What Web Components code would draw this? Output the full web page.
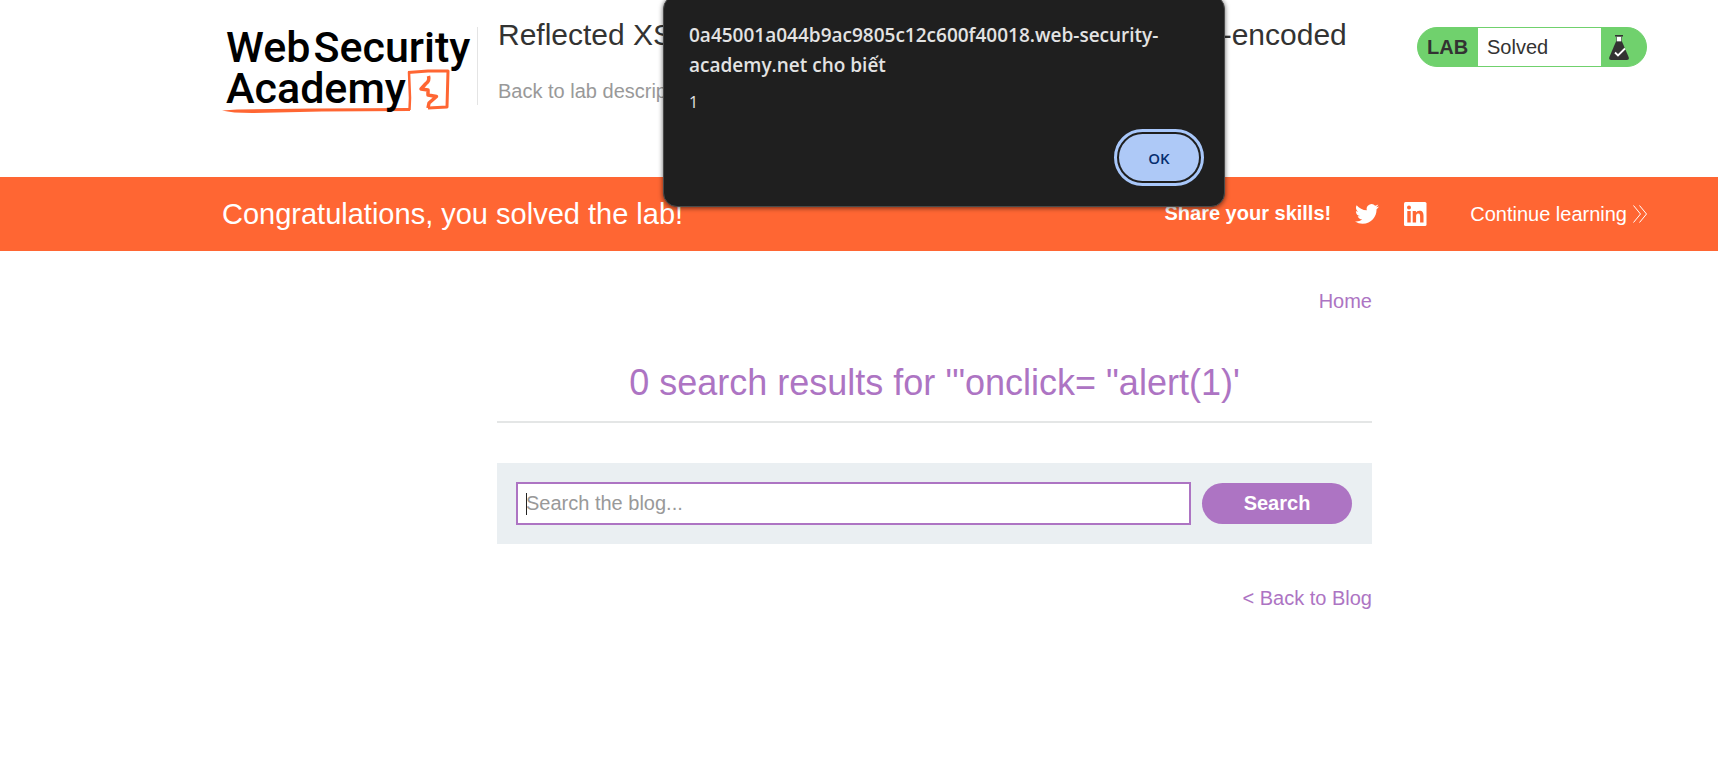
<!DOCTYPE html>
<html lang="en">
<head>
<meta charset="utf-8">
<title>Reflected XSS into attribute with angle brackets HTML-encoded</title>
<style>
  body { margin: 0; background: #fff; color: #333332; font: 20px/24px "Liberation Sans", Arial, sans-serif; }
</style>
</head>
<body>
<lab-page></lab-page>

<template id="t-page">
  <style>
    :host { display: block; position: relative; min-height: 100vh; overflow: hidden; }
  </style>
  <lab-header>
    Reflected XSS into attribute with angle brackets HTML-encoded
    <a slot="back" href="#description">Back to lab description</a>
    <lab-status slot="status">Solved</lab-status>
  </lab-header>
  <lab-banner>Congratulations, you solved the lab!</lab-banner>
  <blog-search>0 search results for '"onclick= "alert(1)'</blog-search>
  <alert-dialog heading="0a45001a044b9ac9805c12c600f40018.web-security-academy.net cho biết">1</alert-dialog>
</template>

<template id="t-header">
  <style>
    :host { display: flex; align-items: flex-start; box-sizing: border-box; height: 177px; padding: 27px 71px 0 222px; }
    .titles { flex: 1; min-width: 0; border-left: 1px solid #e4e4e4; height: 78px; padding-left: 20px; }
    h2 { margin: -10px 0 0; font-weight: 400; font-size: 30px; line-height: 36px; white-space: nowrap; }
    .back { margin-top: 26px; line-height: 24px; }
    ::slotted(a) { color: #999; text-decoration: none; }
    academy-logo { flex: 0 0 255px; min-width: 0; }
  </style>
  <academy-logo></academy-logo>
  <div class="titles">
    <h2><slot></slot></h2>
    <div class="back"><slot name="back"></slot></div>
  </div>
  <slot name="status"></slot>
</template>

<template id="t-logo">
  <style>
    :host { display: block; height: 88px; position: relative; }
    a { display: block; color: #000; text-decoration: none; font: 500 43px/41px Roboto, sans-serif; padding-left: 4px; white-space: nowrap; position: relative; }
    .row { display: flex; gap: 3px; }
    svg { position: absolute; left: 0; top: 41px; }
  </style>
  <svg width="230" height="46" viewBox="0 0 230 46" fill="none" stroke="#ff6633" stroke-linejoin="round">
    <path d="M0 42.500L15 41.500 90 40.500 188 40 188 43 100 43.500 30 45Q10 45 0 42.500Z" fill="#ff6633" stroke="none"/>
    <path d="M187.500 42L188 30 187 4" stroke-width="2.500"/>
    <path d="M186 4.500L206 3 226 3 225 39 206 40" stroke-width="3"/>
    <path d="M206.500 8Q208 13 203.500 16L199 21 206 22 206 27 214.500 28.500 207 35 206 40" stroke-width="3.500"/>
  </svg>
  <a href="#home">
    <div class="row"><span>Web</span><span>Security</span></div>
    <div class="row">Academy</div>
  </a>
</template>

<template id="t-status">
  <style>
    :host { display: flex; flex: 0 0 230px; box-sizing: border-box; height: 40px; border: 1px solid #70d16d; border-radius: 20px; background: #70d16d; overflow: hidden; line-height: 38px; }
    b { width: 60px; padding-left: 9px; box-sizing: border-box; }
    p { flex: 1; margin: 0; padding-left: 9px; background: #fff; }
    svg { width: 45px; height: 38px; }
  </style>
  <b>LAB</b>
  <p><slot></slot></p>
  <svg viewBox="-2 0 45 38">
    <path d="M12 7h8v1.500h-8z" fill="#333332"/>
    <path d="M13.500 8.500h5V14h-5z" fill="#fff" stroke="#333332" stroke-width=".6"/>
    <path d="M13 13.500h6l6.600 15.500q1 3-2 3h-15.200q-3 0-2-3z" fill="#333332"/>
    <path d="M12 24.500l3 3 7-7" fill="none" stroke="#fff" stroke-width="1.800"/>
  </svg>
</template>

<template id="t-banner">
  <style>
    :host { display: flex; align-items: center; box-sizing: border-box; height: 74px; padding: 0 71px 0 222px; background: #ff6633; color: #fff; }
    h4 { margin: 0 auto 0 0; font-weight: 400; font-size: 29px; line-height: 36px; }
    a { color: #fff; text-decoration: none; display: flex; align-items: center; }
    svg { display: block; }
    .share { margin-right: 24px; padding-bottom: 2px; }
    .tw { margin-right: 24px; }
    .in { margin-right: 43px; }
    .next { gap: 6px; }
  </style>
  <h4><slot></slot></h4>
  <b class="share">Share your skills!</b>
  <a class="tw" href="#twitter" aria-label="Share on Twitter">
    <svg width="24" height="24" viewBox="0 0 24 24" fill="#fff"><path d="M23.950 4.570a10 10 0 0 1-2.820.780 4.960 4.960 0 0 0 2.160-2.730c-.950.560-2 .960-3.120 1.190a4.920 4.920 0 0 0-8.390 4.480C7.690 8.100 4.070 6.130 1.640 3.160a4.820 4.820 0 0 0-.670 2.480c0 1.710.870 3.210 2.190 4.100a4.900 4.900 0 0 1-2.230-.620v.060a4.920 4.920 0 0 0 3.950 4.830 5 5 0 0 1-2.210.080 4.940 4.940 0 0 0 4.600 3.420A9.870 9.870 0 0 1 0 19.540a13.990 13.990 0 0 0 7.550 2.210c9.050 0 14-7.500 14-13.990 0-.210 0-.420-.020-.630a9.940 9.940 0 0 0 2.460-2.550z"/></svg>
  </a>
  <a class="in" href="#linkedin" aria-label="Share on LinkedIn">
    <svg width="24" height="24" viewBox="0 0 24 24"><rect x="1" y="0" width="22.500" height="24" rx="1.500" fill="#fff"/><g fill="#ff6633"><circle cx="6" cy="5.500" r="2"/><path d="M4.300 9h3.400v11.500H4.300zM9.700 9h3.200v1.600c.6-1.100 1.800-1.900 3.500-1.900 3.300 0 4.100 2.100 4.100 5v6.800h-3.400v-6c0-1.500-.1-3-1.900-3s-2.100 1.400-2.100 2.900v6.100H9.700z"/></g></svg>
  </a>
  <a class="next" href="#next">Continue learning
    <svg width="14" height="18" viewBox="0 0 14 18" fill="none" stroke="#fff"><path d="M.5 .5L7.500 9 .5 17.500M6.500 .5L13.500 9 6.500 17.500"/></svg>
  </a>
</template>

<template id="t-search">
  <style>
    :host { display: block; box-sizing: border-box; padding: 38px 71px 40px 222px; }
    main { max-width: 875px; margin: 0 auto; color: #ad74c3; }
    nav { text-align: right; }
    a { color: inherit; text-decoration: none; }
    h1 { margin: 46px 0 0; padding-bottom: 14px; border-bottom: 2px solid #e4e6e6; font-weight: 400; font-size: 36px; line-height: 48px; text-align: center; }
    form { display: flex; align-items: center; gap: 11px; margin: 40px 0 42px; padding: 19px 20px 19px 19px; background: #eaeff2; position: relative; }
    input { flex: 1; min-width: 0; box-sizing: border-box; height: 43px; margin: 0; padding: 0 8px; border: 2px solid #ad74c3; border-radius: 0; background: #fff; font: inherit; color: #333332; outline: 0; }
    input::placeholder { color: #999; opacity: 1; }
    button { width: 150px; height: 41px; padding: 0 0 2px; border: 0; border-radius: 21px; background: #ad74c3; color: #fff; font: inherit; font-weight: 700; }
    .caret { position: absolute; left: 29px; top: 30px; width: 1px; height: 22px; background: #222; }
  </style>
  <main>
    <nav><a href="#home">Home</a></nav>
    <h1><slot></slot></h1>
    <form>
      <input type="text" name="search" placeholder="Search the blog..." aria-label="Search the blog">
      <i class="caret"></i>
      <button type="button">Search</button>
    </form>
    <nav><a href="#blog">&lt; Back to Blog</a></nav>
  </main>
</template>

<template id="t-dialog">
  <style>
    :host { position: absolute; top: -5px; left: 663px; width: 562px; height: 212px; box-sizing: border-box; padding: 24px 25px; border-radius: 14px; border: 1px solid #4a4a4a; background: #1f1f1f; color: #e3e3e3; box-shadow: 0 1px 5px rgba(0,0,0,.6); font-family: "Open Sans", "Noto Sans", sans-serif; display: flex; flex-direction: column; }
    h3 { margin: 0; font-size: 19px; line-height: 30px; font-weight: 600; }
    p { margin: 10px 0 0; font-size: 16px; line-height: 24px; }
    button { align-self: flex-end; margin: 20px 0 0; width: 80px; height: 47px; flex: none; border: 0; border-radius: 24px; background: #aec9f7; color: #062e6f; outline: 3px solid #a8c7fa; outline-offset: 2px; font: 600 15px/24px "Open Sans", "Noto Sans", sans-serif; }
  </style>
  <h3></h3>
  <p><slot></slot></p>
  <button type="button">OK</button>
</template>

<script>
  class TemplateElement extends HTMLElement {
    constructor() {
      super();
      const tpl = document.getElementById(this.constructor.template);
      this.attachShadow({ mode: "open" }).append(tpl.content.cloneNode(true));
    }
  }
  const define = (name, template) =>
    customElements.define(name, class extends TemplateElement { static template = template; });

  customElements.define("alert-dialog", class extends TemplateElement {
    static template = "t-dialog";
    connectedCallback() {
      this.setAttribute("role", "alertdialog");
      this.shadowRoot.querySelector("h3").textContent = this.getAttribute("heading");
    }
  });
  define("academy-logo", "t-logo");
  define("lab-status", "t-status");
  define("lab-header", "t-header");
  define("lab-banner", "t-banner");
  define("blog-search", "t-search");
  define("lab-page", "t-page");
</script>
</body>
</html>
